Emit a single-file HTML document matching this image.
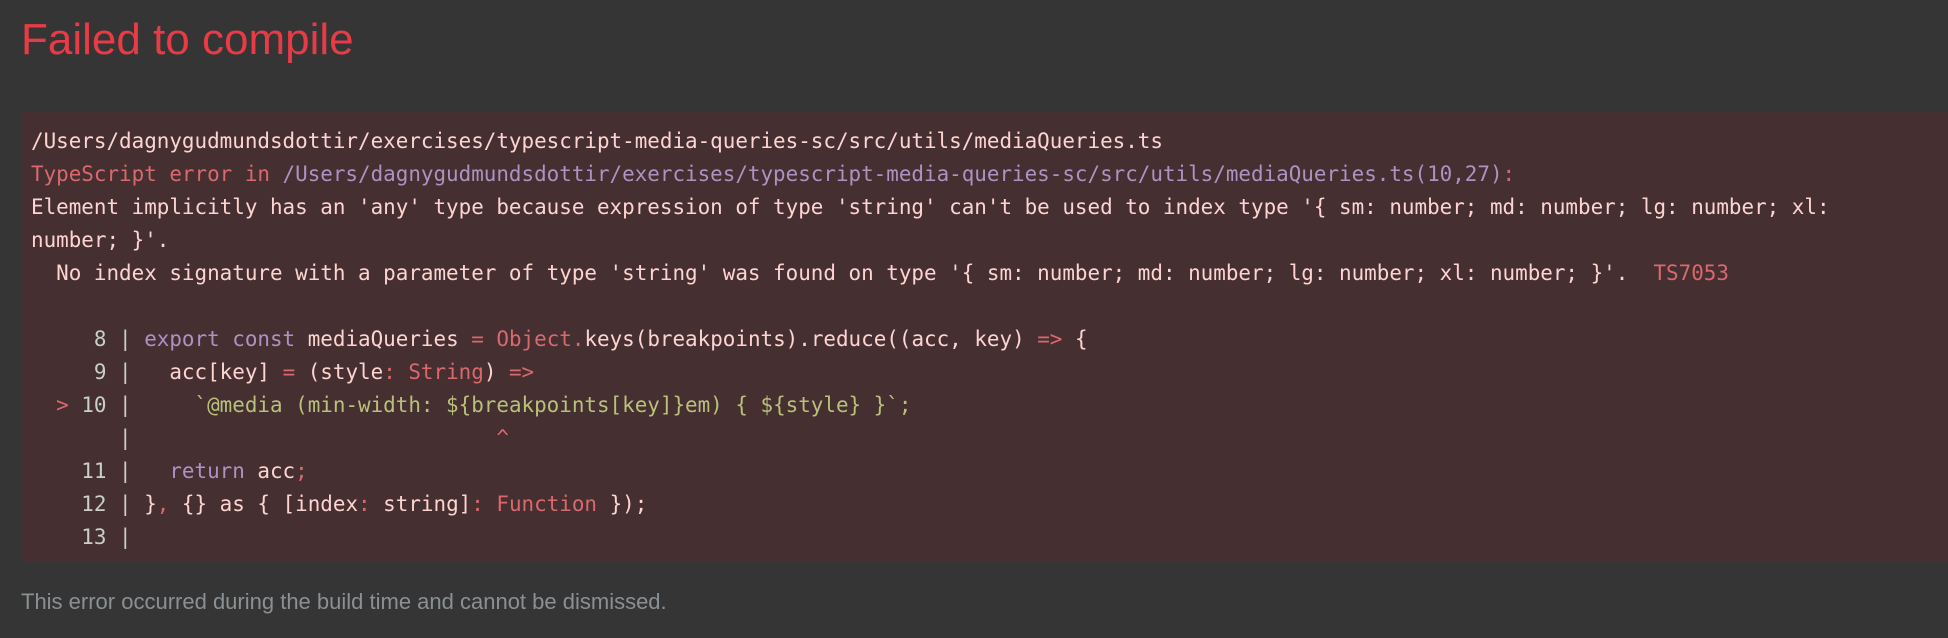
<!DOCTYPE html>
<html><head><meta charset="utf-8"><style>
html,body{margin:0;padding:0;background:#353535;width:1948px;height:638px;overflow:hidden;position:relative}
.t{position:absolute;left:21px;top:18px;font:44px/44px "Liberation Sans",sans-serif;color:#e83b46;white-space:nowrap}
.box{position:absolute;left:21px;top:112px;right:0;height:450px;background:#452f31}
pre{position:absolute;left:31px;top:125px;margin:0;font:20.9px/33px "DejaVu Sans Mono","Liberation Mono",monospace;color:#fdd4d0;white-space:pre}
.p{color:#ab93c2}.r{color:#d9696e}.g{color:#b9c07a}.n{color:#c9cfc9}
.f{position:absolute;left:21px;top:591px;font:22px/22px "Liberation Sans",sans-serif;color:#8a9093;white-space:nowrap}
</style></head><body>
<div class="t">Failed to compile</div>
<div class="box"></div>
<pre>/Users/dagnygudmundsdottir/exercises/typescript-media-queries-sc/src/utils/mediaQueries.ts
<span class="r">TypeScript error in </span><span class="p">/Users/dagnygudmundsdottir/exercises/typescript-media-queries-sc/src/utils/mediaQueries.ts(10,27)</span><span class="r">:</span>
Element implicitly has an 'any' type because expression of type 'string' can't be used to index type '{ sm: number; md: number; lg: number; xl:
number; }'.
  No index signature with a parameter of type 'string' was found on type '{ sm: number; md: number; lg: number; xl: number; }'.  <span class="r">TS7053</span>

<span class="n">     8 | </span><span class="p">export const</span> mediaQueries <span class="r">=</span> <span class="r">Object.</span>keys(breakpoints).reduce((acc, key) <span class="r">=&gt;</span> {
<span class="n">     9 | </span>  acc[key] <span class="r">=</span> (style<span class="r">: String</span>) <span class="r">=&gt;</span>
<span class="r">  &gt; </span><span class="n">10 | </span><span class="g">    `@media (min-width: ${breakpoints[key]}em) { ${style} }`;</span>
<span class="n">       | </span>                            <span class="r">^</span>
<span class="n">    11 | </span>  <span class="p">return</span> acc<span class="r">;</span>
<span class="n">    12 | </span>}<span class="r">,</span> {} as { [index<span class="r">:</span> string]<span class="r">: Function</span> });
<span class="n">    13 | </span></pre>
<div class="f">This error occurred during the build time and cannot be dismissed.</div>
</body></html>
